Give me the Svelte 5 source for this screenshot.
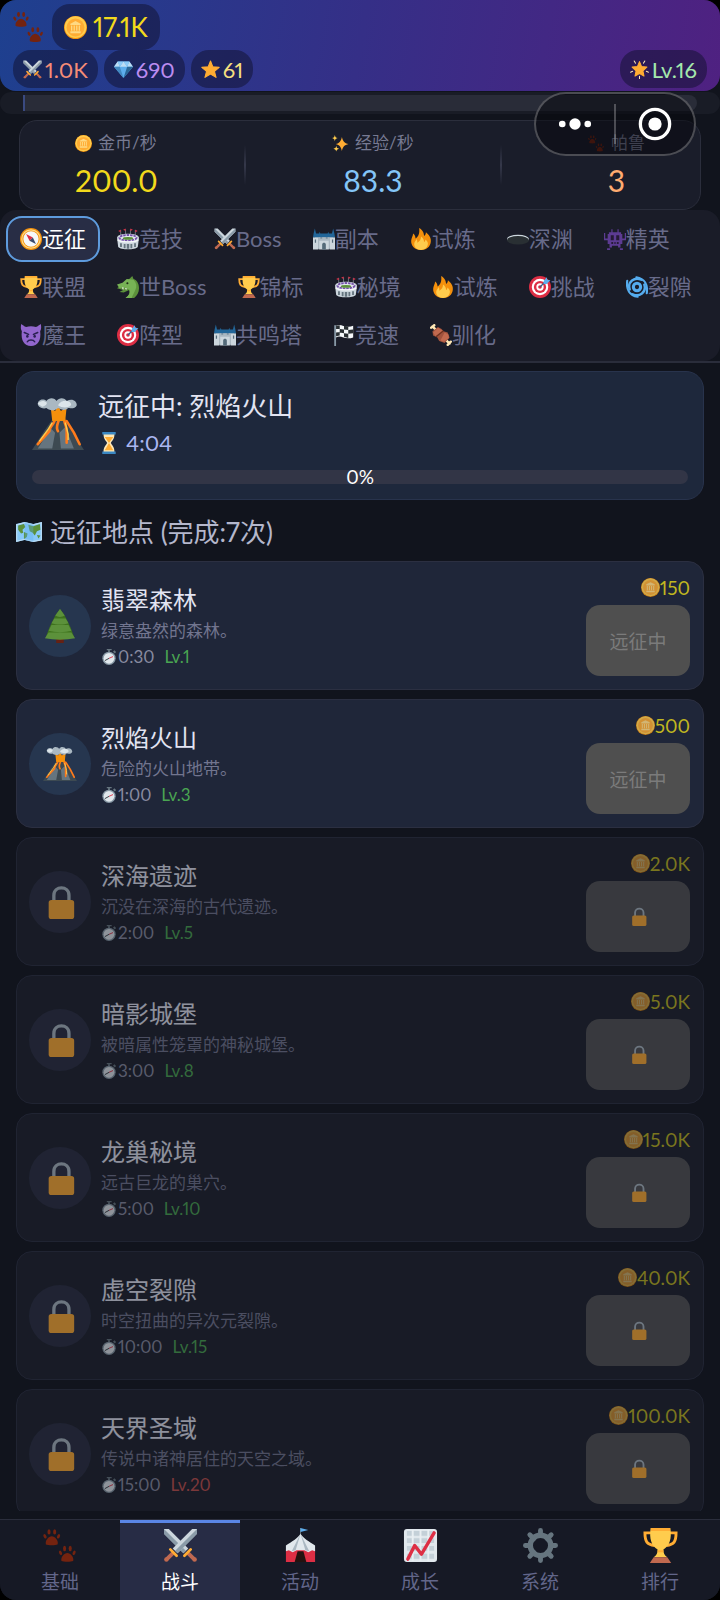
<script>
  // Icon artwork, every entry is drawn on a 36x36 grid
  const pawShape =
    '<path d="M3 17c-1.200-4 2.800-8.400 6-8.400s7.200 4.400 6 8.400c-2 1-10 1-12 0z"/><ellipse cx="1.800" cy="8.500" rx="1.400" ry="2.400" transform="rotate(-25 2 8)"/><ellipse cx="6.200" cy="4" rx="1.600" ry="2.800"/><ellipse cx="12" cy="4" rx="1.600" ry="2.800"/><ellipse cx="16.200" cy="8.500" rx="1.400" ry="2.400" transform="rotate(25 16 8)"/>';

  const swordShape =
    '<path fill="#ccd6dd" d="M1 1h5l20 20-5 5L1 6z"/><path fill="#8a9ba8" d="M1 1l22.500 22.500L21 26 1 6z"/><path stroke="#bf6952" stroke-width="4" d="M25 25l7 7"/><path stroke="#ffac33" stroke-width="2.800" stroke-linecap="round" d="M22 28.500l6.500-6.500"/><circle cx="32.500" cy="32.500" r="2.300" fill="#c1694f"/>';

  const icons = {
    paw: `<g fill="#74230f"><g>${pawShape}</g><g transform="translate(16 17)">${pawShape}</g></g>`,
    coin: '<circle cx="18" cy="18" r="18" fill="#f4900c"/><circle cx="18" cy="17.500" r="17" fill="#ffcc4d"/><circle cx="18" cy="18" r="14" fill="#ffac33"/><path fill="#ffd983" d="M18 8l8 4v2H10v-2zM11 15h2v8h-2zM15 15h2v8h-2zM19 15h2v8h-2zM23 15h2v8h-2zM10 24h16v3H10z"/>',
    swords: `<g>${swordShape}</g><g transform="translate(36 0) scale(-1 1)">${swordShape}</g>`,
    gem: '<path fill="#5dadec" d="M7 3h22l7 10-18 21L0 13z"/><path fill="#bdddf4" d="M7 3l4 10H0zM18 3l7 10H11zM29 3l7 10H25z"/><path fill="#8ccaf7" d="M7 3h11l-7 10zM18 3h11l-4 10z"/><path fill="#4289c1" d="M0 13h11l7 21z"/><path fill="#2a6797" d="M36 13H25l-7 21z"/>',
    star: '<path fill="#ffac33" stroke="#ffac33" stroke-width="2" stroke-linejoin="round" d="M18 2l4.500 11 12 .8-9 7.700 3 11.500L18 26.500 7.500 33l3-11.500-9-7.700 12-.8z"/>',
    glow: '<path fill="#ffac33" stroke="#ffac33" stroke-width="2" stroke-linejoin="round" d="M18 3l4 9.500 10 1-7.500 7 2 10-8.500-5-8.500 5 2-10-7.500-7 10-1z"/><path stroke="#ffe8b6" stroke-width="2" stroke-linecap="round" d="M8 2l2.500 4M28 2l-2.500 4M1 23l4-1.500M35 23l-4-1.500M18 31v4"/>',
    sparkles: '<path fill="#ffac33" d="M21 4c2 9 5 13 14 15-9 2-12 6-14 15-2-9-5-13-13-15 8-2 11-6 13-15z"/><path fill="#ffcc4d" d="M6 0c.8 4.500 2 5.500 6 6.500-4 1-5.200 2-6 6.500-.8-4.500-2-5.500-6-6.500 4-1 5.200-2 6-6.500zM9 23c.8 4.500 2 5.500 6 6-4 1-5.200 2-6 6-.8-4-2-5-6-6 4-.5 5.200-1.500 6-6z"/>',
    compass: '<circle cx="18" cy="18" r="18" fill="#f4900c"/><circle cx="18" cy="18" r="12.500" fill="#f5f8fa"/><circle cx="18" cy="18" r="15" fill="none" stroke="#ffd983" stroke-width="2"/><path fill="#dd2e44" d="M10 10l11 5.500-5.500 5.500z"/><path fill="#3b4a6b" d="M26 26l-10.500-5L21 15.500z"/>',
    stadium: '<path stroke="#9aa5ae" d="M6 3v10M14 2v9M22 2v9M30 3v10"/><path fill="#dd2e44" d="M6 3l-4 2 4 2zM14 1l-4 2 4 2zM22 1l4 2-4 2zM30 3l4 2-4 2z"/><path fill="#ccd6dd" d="M0 16c0-9 36-9 36 0l-2 15c-4 5-28 5-32 0z"/><ellipse cx="18" cy="16" rx="15" ry="5" fill="#e1e8ed"/><ellipse cx="18" cy="16" rx="14" ry="4.500" fill="none" stroke="#744eaa" stroke-width="3" stroke-dasharray="4 1.500"/><ellipse cx="18" cy="17" rx="8.500" ry="2.300" fill="#5c913b"/><path fill="#66757f" d="M5 25h3v6H5zM11 26h3v7h-3zM16 26h4v8h-4zM22 26h3v7h-3zM28 25h3v6h-3z"/><path fill="none" stroke="#f5f8fa" stroke-width="2" d="M1 19c3 5 31 5 34 0"/>',
    castle: '<path fill="#8899a6" d="M3 13h30v21H3z"/><path fill="#ccd6dd" d="M0 15h9v20H0zM27 15h9v20h-9zM10 19h16v16H10z"/><path fill="#226699" d="M1 9l2-8 2 8h5l1-3 1 3h12l1-3 1 3h5l2-8 2 8 1 6H0z"/><path fill="#aab8c2" d="M9 15h3v3h3v-3h6v3h3v-3h3v6H9z"/><path fill="#546a79" d="M15 35v-8c0-4 6-4 6 0v8zM3 19h2v5H3zM31 19h2v5h-2z"/>',
    fire: '<path fill="#f4900c" d="M18 36C8 36 1 29 2 20c.5-4 3-7 3-11 3 2 4 5 4 8 5-3 7-8 6-17 6 3 8 9 8 13 2-1 3-3 3-6 5 4 9 9 8 16-1 8-7 13-16 13z"/><path fill="#ffcc4d" d="M18 36C11 36 6 31 7 25c.5-3 3-5 4-7 1 2 1 4 1 6 4-2 6-5 6-10 4 3 5 6 5 9 2-1 2-2 2-4 4 3 5 6 4 9-1 5-5 8-11 8z"/>',
    hole: '<ellipse cx="18" cy="18" rx="18" ry="7" fill="#ccd6dd"/><ellipse cx="18" cy="20" rx="18" ry="7" fill="#292f33"/>',
    monster: '<path fill="#5c3b92" d="M12 2h2v5h8V2h2v5h4v3h2v16h-3v3H9v-3H6V10h2V7h4zM0 8h2v9h4v3H0zM34 8h2v12h-6v-3h4zM9 29h4v3H9zM23 29h4v3h-4zM5 33h5v3H5zM26 33h5v3h-5z"/><path fill="#251a35" d="M11 12h5v8h-5zM20 12h5v8h-5zM12 23h3v3h-3zM17 23h2v3h-2zM21 23h3v3h-3z"/>',
    trophy: '<path fill="none" stroke="#ffac33" stroke-width="3" d="M9 5H2c0 9 2 12 10 13M27 5h7c0 9-2 12-10 13"/><path fill="#ffcc4d" d="M8 0h20c2 11-1 19-7 22 0 4 1 6 4 8H11c3-2 4-4 4-8C9 19 6 11 8 0z"/><path fill="#ffac33" d="M8 0h20v3H8zM15 23h6v2h-6z"/><path fill="#c1694f" d="M11 30h14l4 6H7z"/>',
    dragon: '<path fill="#5c913b" d="M20 5l5-5 2 5c6 2 9 8 9 15 0 7-3 12-8 16H14c6-4 8-8 6-13l-9 4-7-1 6-3-10-3z"/><path fill="#77b255" d="M0 14l9-3 7-6 11 1c5 5 6 11 3 17-2 5-4 8-6 13H14c6-4 8-9 6-14l-8-3-8 1z"/><path fill="#fff" d="M8 19h3l-1 4zM13 20h3l-1 3z"/><circle cx="17" cy="12" r="1.700" fill="#1c2915"/>',
    target: '<circle cx="18" cy="18" r="18" fill="#dd2e44"/><circle cx="18" cy="18" r="13.500" fill="#fff"/><circle cx="18" cy="18" r="10" fill="#dd2e44"/><circle cx="18" cy="18" r="6" fill="#fff"/><circle cx="18" cy="18" r="3" fill="#dd2e44"/><path stroke="#34618c" stroke-width="2" d="M18 18L29 7"/><path fill="#5dadec" d="M24 8l5-6 1 4 5 1-6 6-5 0z"/>',
    cyclone: '<g fill="none" stroke="#55acee" stroke-linecap="round"><circle cx="18" cy="18" r="6" stroke-width="5"/><path stroke-width="4" d="M6 22C2 9 14 1 25 6M30 14c4 13-8 21-19 16"/><path stroke-width="3.500" d="M2 8c-2 14 4 24 17 26M34 28c2-14-4-24-17-26"/></g>',
    imp: '<path fill="#9266cc" d="M2 0c2 1 5 4 8 5 5-2 11-2 16 0 3-1 6-4 8-5 1 5 1 8-1 12 2 15-4 24-15 24S1 27 3 12C1 8 1 5 2 0z"/><path fill="none" stroke="#292050" stroke-width="2.500" stroke-linecap="round" d="M7 14l7 3M29 14l-7 3M12 29c2-4 10-4 12 0"/><ellipse cx="12" cy="20" rx="2" ry="2.500" fill="#292050"/><ellipse cx="24" cy="20" rx="2" ry="2.500" fill="#292050"/>',
    flag: '<path fill="#8899a6" d="M2 2h3v34H2z"/><path fill="#f5f8fa" d="M5 3c8-5 15 5 28 0v19c-13 5-20-5-28 0z"/><path fill="#292f33" d="M5 3l6-1v6H5zM18 3l7 1v6l-7-1zM11 8l7 1v6l-7-1zM25 10l8-1v6l-8 1zM5 14l6-1v6l-6 1zM18 15l7 1v7l-7-2z"/>',
    meat: '<path stroke="#ffe8b6" stroke-width="4" stroke-linecap="round" d="M4 4l28 28M2 6l5-4M29 34l5-5"/><path fill="#a0523d" d="M13 5l6 3 3 4 7 2 3 8-8 9-9-3-3-6-7-3-1-7z"/><path fill="#c1694f" d="M13 6l8 5-12 9-4-6zM24 14l6 3 1 6-8 6-6-2z"/><path stroke="#6e301f" stroke-width="2" d="M10 21l12-10"/>',
    volcano: '<path fill="#3d4a52" d="M0 36l9-14 5-7h8l5 7 9 14z"/><path fill="#66757f" d="M4 35l9-14 3 3-2 11zM20 35l-1-11 4-4 6 15z"/><path fill="none" stroke="#ff7b1c" stroke-width="1.800" stroke-linecap="round" d="M16 15c-2 5-4 5-4 8L4 32M19 14c-1 4-3 6-1 9M22 14c1 6 2 5 2 9v8M24 16l5 8 4 8"/><path stroke="#ffcc4d" d="M14 17l-3 5-6 8M23 17l2 8v4"/><path fill="#f4900c" d="M13 7l3 2 2-4 2 4 4-3-1 10H14z"/><path fill="#aab8c2" d="M4 4c0-3 4-4 6-2 2-3 6-2 7 0 2-3 6-2 7 0 4-2 7 0 7 3-1 3-5 2-6 2-3 3-6 0-7 0-3 3-7 1-8 0-3 1-6-1-6-3z"/><path fill="#dce5ea" d="M4 4c2-3 5-2 6-1s-1 3-3 3zM18 5c2-4 8-4 9-1 1 2-5 4-9 1z"/>',
    hourglass: '<path fill="#ffe8b6" d="M9 3h18c0 9-4 11-6 15 2 4 6 6 6 15H9c0-9 4-11 6-15C13 14 9 12 9 3z"/><path fill="#ffac33" d="M11 8h14l-7 10zM18 18l7 12H11z"/><path fill="#3b88c3" d="M7 0h22v4H7zM7 32h22v4H7z"/>',
    map: '<path fill="#88c9f9" d="M0 7l12-3 12 3 12-3v25l-12 3-12-3-12 3z"/><path fill="#5c913b" d="M3 9l8-2 2 4-4 4 1 4-3 1-4-5zM11 18l5 2-1 5-4 3zM17 8l7 2 9-3 1 8-5 2-3 6-3-4-4-2zM29 22l5 1-3 4z"/><path stroke="#bdddf4" stroke-width="1.500" fill="none" d="M1 8l11-3 12 3 11-3v24l-11 2-12-3-11 3z"/><path fill="#5dadec" opacity=".35" d="M12 4l12 3v25l-12-3z"/>',
    tree: '<path fill="#662113" d="M14 28h8v8h-8z"/><path fill="#3e721d" d="M18 0l5 7 3 6 3 6 4 11c-9 2-21 2-30 0l4-11 3-6 3-6z"/><path fill="#5c913b" d="M18 0l5 7c-3 2-7 2-10 0zM12 10h12l3 5c-5 2-13 2-18 0zM9 17h18l3 6c-6 2-18 2-24 0zM6 25h24l4 6c-10 2-22 2-32 0z"/>',
    stopwatch: '<path fill="#66757f" d="M13 0h11v3h-4v4h-4V3h-3zM27 6l3-3 4 4-3 3z"/><circle cx="18" cy="21" r="15" fill="#8899a6"/><circle cx="18" cy="21" r="12" fill="#e1e8ed"/><path stroke="#292f33" stroke-width="2" d="M18 21L9 26"/><path stroke="#dd2e44" stroke-width="2" d="M18 21l9-4"/>',
    lock: '<path fill="none" stroke="#aab8c2" stroke-width="3.500" d="M11.500 19v-8c0-10.500 16-10.500 16 0v8"/><rect x="6" y="16" width="27" height="20" rx="3" fill="#ffac33"/>',
    tent: '<path stroke="#66757f" d="M18 0v9"/><path fill="#5dadec" d="M18 0l8 2-8 2z"/><path fill="#dd2e44" d="M3 22h30v13H3z"/><path fill="#e1e8ed" d="M18 6c3 5 9 8 15 12v6l-3-1-4 2-4-2h-8l-4 2-4-2-3 1v-6C9 14 15 11 18 6z"/><path fill="#aab8c2" d="M18 6l-5 17-4 1zM18 6l5 17 4 1z"/><path fill="#24120f" d="M15 24h6l3 11H12z"/>',
    chart: '<rect x="1" y="1" width="34" height="34" rx="3" fill="#e1e8ed"/><path stroke="#c4d0d8" stroke-width="5" d="M4 5.500h28M4 13h28M4 21h28M4 29h28"/><path stroke="#e9eff3" stroke-width="2" d="M10 2v32M18 2v32M26 2v32"/><path fill="none" stroke="#dd2e44" stroke-width="3.500" stroke-linecap="round" stroke-linejoin="round" d="M5 32l7-14 7 9L32 5"/>',
    gear: '<circle cx="18" cy="18" r="10.500" fill="none" stroke="#66757f" stroke-width="5.500"/><path stroke="#66757f" stroke-width="5" stroke-linecap="round" d="M18 2.500v5M18 28.500v5M2.500 18h5M28.500 18h5M7 7l4 4M25 25l4 4M29 7l-4 4M7 29l4-4"/>'
  };

  const rates = [
    { icon: "coin", label: "金币/秒", value: "200.0", tone: "gold" },
    { icon: "sparkles", label: "经验/秒", value: "83.3", tone: "blue" },
    { icon: "paw", label: "帕鲁", value: "3", tone: "orange" }
  ];

  const modes = [
    ["compass", "远征"],
    ["stadium", "竞技"],
    ["swords", "Boss"],
    ["castle", "副本"],
    ["fire", "试炼"],
    ["hole", "深渊"],
    ["monster", "精英"],
    ["trophy", "联盟"],
    ["dragon", "世Boss"],
    ["trophy", "锦标"],
    ["stadium", "秘境"],
    ["fire", "试炼"],
    ["target", "挑战"],
    ["cyclone", "裂隙"],
    ["imp", "魔王"],
    ["target", "阵型"],
    ["castle", "共鸣塔"],
    ["flag", "竞速"],
    ["meat", "驯化"]
  ];

  const playerLevel = 16;

  const places = [
    { icon: "tree", name: "翡翠森林", desc: "绿意盎然的森林。", time: "0:30", level: 1, cost: "150", open: true },
    { icon: "volcano", name: "烈焰火山", desc: "危险的火山地带。", time: "1:00", level: 3, cost: "500", open: true },
    { icon: "lock", name: "深海遗迹", desc: "沉没在深海的古代遗迹。", time: "2:00", level: 5, cost: "2.0K", open: false },
    { icon: "lock", name: "暗影城堡", desc: "被暗属性笼罩的神秘城堡。", time: "3:00", level: 8, cost: "5.0K", open: false },
    { icon: "lock", name: "龙巢秘境", desc: "远古巨龙的巢穴。", time: "5:00", level: 10, cost: "15.0K", open: false },
    { icon: "lock", name: "虚空裂隙", desc: "时空扭曲的异次元裂隙。", time: "10:00", level: 15, cost: "40.0K", open: false },
    { icon: "lock", name: "天界圣域", desc: "传说中诸神居住的天空之域。", time: "15:00", level: 20, cost: "100.0K", open: false }
  ];

  const sections = [
    ["paw", "基础"],
    ["swords", "战斗"],
    ["tent", "活动"],
    ["chart", "成长"],
    ["gear", "系统"],
    ["trophy", "排行"]
  ];

  let activeMode = $state(0);
  let activeSection = $state(1);
  let progress = $state(0);
</script>

{#snippet icon(name)}
  <svg class="icon" viewBox="0 0 36 36" fill="none" aria-hidden="true">{@html icons[name]}</svg>
{/snippet}

<div class="app">
  <header>
    <div class="wallet">
      <span class="brand">{@render icon("paw")}</span>
      <span class="pill big gold">{@render icon("coin")}17.1K</span>
    </div>
    <div class="wallet">
      <span class="pill power">{@render icon("swords")}1.0K</span>
      <span class="pill gems">{@render icon("gem")}690</span>
      <span class="pill stars">{@render icon("star")}61</span>
      <span class="pill level">{@render icon("glow")}Lv.16</span>
    </div>
  </header>

  <div class="xp"><div class="xp-track"></div></div>

  <section class="rates">
    {#each rates as rate, i}
      {#if i > 0}<div class="divider"></div>{/if}
      <div class="rate">
        <div class="rate-label">{@render icon(rate.icon)}{rate.label}</div>
        <div class="rate-value {rate.tone}">{rate.value}</div>
      </div>
    {/each}
  </section>

  <!-- Mini program menu, floats over the page -->
  <div class="capsule">
    <button aria-label="更多">
      <svg viewBox="0 0 36 36" fill="#fff"><circle cx="4.500" cy="18" r="3.500" /><circle cx="18" cy="18" r="6" /><circle cx="31.500" cy="18" r="3.500" /></svg>
    </button>
    <button aria-label="关闭">
      <svg viewBox="0 0 36 36" fill="none"><circle cx="18" cy="18" r="15.500" stroke="#fff" stroke-width="3.500" /><circle cx="18" cy="18" r="7" fill="#fff" /></svg>
    </button>
  </div>

  <div class="modes-wrap">
    <nav class="modes">
      {#each modes as [name, label], i}
        <button class="mode" class:active={i === activeMode} onclick={() => (activeMode = i)}>
          {@render icon(name)}{label}
        </button>
      {/each}
    </nav>
  </div>

  <main>
    <section class="current">
      <div class="current-row">
        {@render icon("volcano")}
        <div>
          <h1>远征中: 烈焰火山</h1>
          <div class="countdown">{@render icon("hourglass")}4:04</div>
        </div>
      </div>
      <div class="progress" role="progressbar" aria-label="远征中" aria-valuenow={progress}>
        <div class="progress-fill" style="width: {progress}%"></div>
        <span>{progress}%</span>
      </div>
    </section>

    <h2>{@render icon("map")}远征地点 (完成:7次)</h2>

    <div class="places">
      {#each places as place}
        <article class="place" class:locked={!place.open}>
          <div class="avatar">{@render icon(place.icon)}</div>
          <div class="info">
            <h3>{place.name}</h3>
            <p>{place.desc}</p>
            <div class="meta">
              <span class="time">{@render icon("stopwatch")}{place.time}</span>
              <span class="req" class:unmet={place.level > playerLevel}>Lv.{place.level}</span>
            </div>
          </div>
          <div class="action">
            <div class="cost">{@render icon("coin")}{place.cost}</div>
            <button disabled aria-label={place.name}>
              {#if place.open}远征中{:else}{@render icon("lock")}{/if}
            </button>
          </div>
        </article>
      {/each}
    </div>
  </main>

  <nav class="sections">
    {#each sections as [name, label], i}
      <button class:active={i === activeSection} onclick={() => (activeSection = i)}>
        {@render icon(name)}{label}
      </button>
    {/each}
  </nav>
</div>

<style>
  :global(body) {
    background: #000;
  }

  .app {
    position: relative;
    display: flex;
    flex-direction: column;
    height: 100vh;
    overflow: hidden;
    border-radius: 16px;
    background: #11141d;
    color: #e2e4f2;
    font-family: Lato, "Noto Sans CJK SC", sans-serif;
    font-variant-numeric: proportional-nums;
  }

  .app * {
    box-sizing: border-box;
  }

  button {
    margin: 0;
    padding: 0;
    border: none;
    background: none;
    color: inherit;
    font: inherit;
    font-variant-numeric: inherit;
  }

  h1,
  h2,
  h3,
  p {
    margin: 0;
    font-weight: 400;
  }

  .icon {
    flex: none;
    width: 22px;
    height: 22px;
  }

  header {
    flex: none;
    padding: 4px 13px 3px;
    border-radius: 0 0 16px 16px;
    background: linear-gradient(100deg, #1e408f, #352f87 50%, #4f2181);
  }

  .wallet {
    display: flex;
    align-items: center;
    gap: 6px;
  }

  .brand {
    display: flex;
    width: 33px;
  }

  .brand .icon {
    width: 32px;
    height: 32px;
  }

  .pill {
    display: flex;
    align-items: center;
    gap: 3px;
    height: 38px;
    padding: 0 10px;
    border-radius: 18px;
    background: rgba(16, 16, 44, 0.5);
    font-size: 22px;
  }

  .pill .icon {
    width: 19px;
    height: 19px;
  }

  .pill.big {
    gap: 6px;
    height: 46px;
    padding: 0 12px;
    font-size: 26px;
  }

  .pill.big .icon {
    width: 23px;
    height: 23px;
  }

  .gold {
    color: #f2d91c;
  }

  .blue {
    color: #84c5f8;
  }

  .orange {
    color: #ffab70;
  }

  .power {
    color: #f58c76;
  }

  .gems {
    color: #bb8cf0;
  }

  .stars {
    color: #f4df80;
  }

  .level {
    margin-left: auto;
    color: #a4e8ac;
  }

  .xp {
    flex: none;
    margin-top: 1px;
    padding: 3px 23px;
    border-radius: 12px;
    background: #191c26;
  }

  .xp-track {
    height: 16px;
    border-left: 2px solid #3a4a80;
    border-radius: 0 8px 8px 0;
    background: #292c38;
  }

  .rates {
    flex: none;
    display: flex;
    align-items: center;
    justify-content: space-around;
    margin: 6px 19px 0;
    padding: 10px 12px;
    border: 1px solid #2b2e3c;
    border-radius: 18px;
    background: #1a1d2a;
  }

  .rate {
    text-align: center;
  }

  .rate-label {
    display: flex;
    align-items: center;
    gap: 6px;
    color: #777a92;
    font-size: 17px;
    line-height: 24px;
  }

  .rate-label .icon {
    width: 17px;
    height: 17px;
  }

  .rate-value {
    margin-top: 6px;
    font-size: 30px;
    line-height: 38px;
  }

  .divider {
    width: 2px;
    height: 40px;
    background: linear-gradient(transparent, #35384a, transparent);
  }

  .capsule {
    position: absolute;
    top: 92px;
    right: 24px;
    z-index: 2;
    display: flex;
    align-items: center;
    width: 162px;
    height: 64px;
    border: 2px solid rgba(255, 255, 255, 0.25);
    border-radius: 32px;
    background: rgba(5, 6, 12, 0.5);
  }

  .capsule button {
    flex: 1;
    display: flex;
    align-items: center;
    justify-content: center;
    height: 40px;
  }

  .capsule button + button {
    border-left: 2px solid rgba(255, 255, 255, 0.25);
  }

  .capsule svg {
    width: 34px;
    height: 34px;
  }

  .modes-wrap {
    flex: none;
    border-bottom: 2px solid #2a2d3b;
  }

  .modes {
    display: flex;
    flex-wrap: wrap;
    gap: 2px 3px;
    padding: 6px 6px 3px;
    border-radius: 16px;
    background: #1a1c28;
  }

  .mode {
    display: flex;
    align-items: center;
    height: 46px;
    padding: 0 12px;
    border: 2px solid transparent;
    border-radius: 16px;
    color: #686b8a;
    font-size: 22px;
    line-height: 30px;
  }

  .mode.active {
    border-color: #5e9bdd;
    background: #282d45;
    color: #fff;
  }

  main {
    flex: 1;
    min-height: 0;
    margin: 8px 0;
    padding: 0 16px;
    overflow: auto;
    scrollbar-width: none;
  }

  .current {
    padding: 15px;
    border: 1px solid #28334c;
    border-radius: 18px;
    background: #1e283c;
  }

  .current-row {
    display: flex;
    align-items: center;
    gap: 14px;
  }

  .current-row > .icon {
    width: 52px;
    height: 52px;
  }

  h1 {
    font-size: 26px;
    line-height: 38px;
  }

  .countdown {
    display: flex;
    align-items: center;
    gap: 6px;
    color: #a9b6f0;
    font-size: 22px;
    line-height: 36px;
  }

  .progress {
    position: relative;
    display: flex;
    align-items: center;
    justify-content: center;
    height: 14px;
    margin-top: 9px;
    border-radius: 7px;
    background: #323546;
    color: #fff;
    font-size: 19px;
    line-height: 24px;
  }

  .progress-fill {
    position: absolute;
    top: 0;
    left: 0;
    height: 100%;
    border-radius: 7px;
    background: #5e86e8;
  }

  h2 {
    display: flex;
    align-items: center;
    gap: 8px;
    padding: 12px 0 9px;
    color: #b4b7cc;
    font-size: 26px;
    line-height: 40px;
  }

  h2 .icon {
    width: 26px;
    height: 26px;
  }

  .places {
    display: flex;
    flex-direction: column;
    gap: 9px;
  }

  .place {
    display: flex;
    align-items: center;
    gap: 10px;
    padding: 13px 13px 13px 12px;
    border: 1px solid #2b2f41;
    border-radius: 16px;
    background: #1f2639;
  }

  .place.locked {
    background: #1d202c;
    opacity: 0.6;
  }

  .avatar {
    flex: none;
    display: flex;
    align-items: center;
    justify-content: center;
    width: 62px;
    height: 62px;
    border-radius: 50%;
    background: #26364f;
  }

  .locked .avatar {
    background: #2a2e42;
  }

  .avatar .icon {
    width: 34px;
    height: 34px;
  }

  .info {
    flex: 1;
  }

  h3 {
    font-size: 24px;
    line-height: 36px;
  }

  p {
    color: #72758f;
    font-size: 17px;
    line-height: 26px;
  }

  .meta {
    display: flex;
    gap: 10px;
    color: #888ba0;
    font-size: 17px;
    line-height: 26px;
  }

  .time {
    display: flex;
    align-items: center;
    gap: 1px;
  }

  .time .icon {
    width: 16px;
    height: 16px;
  }

  .req {
    color: #4aa552;
  }

  .req.unmet {
    color: #c2504e;
  }

  .action {
    display: flex;
    flex-direction: column;
    align-items: flex-end;
    gap: 5px;
  }

  .cost {
    display: flex;
    align-items: center;
    color: #c0b720;
    font-size: 19px;
    line-height: 25px;
  }

  .cost .icon {
    width: 19px;
    height: 19px;
    opacity: 0.8;
  }

  .action button {
    display: flex;
    align-items: center;
    justify-content: center;
    width: 104px;
    height: 71px;
    border-radius: 14px;
    background: #4f4f4f;
    color: #7b7b7b;
    font-size: 19px;
  }

  .locked button {
    background: #535355;
  }

  .action button .icon {
    width: 19px;
    height: 19px;
  }

  .sections {
    flex: none;
    display: flex;
    border-top: 1px solid #2b2e3c;
    background: #161925;
  }

  .sections button {
    flex: 1;
    display: flex;
    flex-direction: column;
    align-items: center;
    gap: 5px;
    padding: 5px 0 4px;
    border-top: 3px solid transparent;
    color: #62668a;
    font-size: 19px;
    line-height: 28px;
  }

  .sections button.active {
    border-top-color: #5a86e6;
    background: #272c45;
    color: #fff;
  }

  .sections .icon {
    width: 35px;
    height: 35px;
  }
</style>
